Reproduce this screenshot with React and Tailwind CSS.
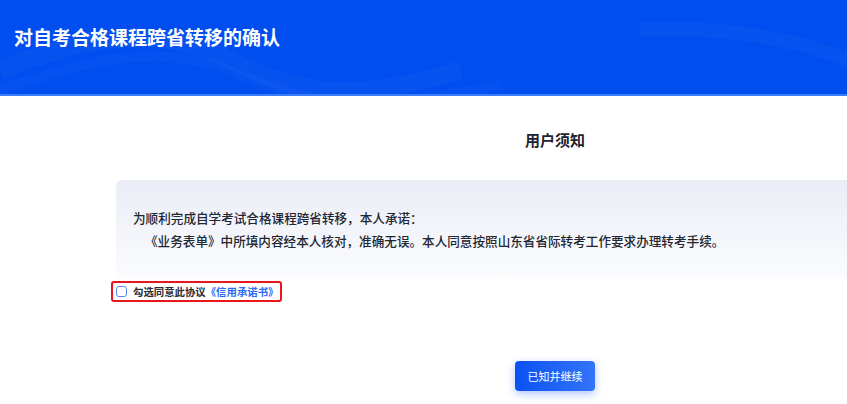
import React from 'react';

const font = { fontFamily: '"Noto Sans CJK SC", "Noto Sans", sans-serif' };

// header band with faint wave lines
const Header = () => (
    <div className="relative h-[96px] bg-[#004ef0] overflow-hidden border-b-2 border-[#3b7cf8]">
        <svg className="absolute inset-0" width="847" height="96" viewBox="0 0 847 96" fill="none">
            <path d="M0 70 C 80 40, 150 20, 230 60 S 360 100, 460 70" stroke="#ffffff" strokeOpacity="0.03" strokeWidth="18" />
            <path d="M0 90 C 90 60, 160 40, 240 75 S 380 110, 500 85" stroke="#ffffff" strokeOpacity="0.025" strokeWidth="10" />
            <path d="M640 30 C 720 25, 800 40, 847 60" stroke="#ffffff" strokeOpacity="0.03" strokeWidth="14" />
        </svg>
        <h1 className="relative pl-[14px] pt-[24px] text-[19px] leading-[26px] font-bold text-white">
            对自考合格课程跨省转移的确认
        </h1>
    </div>
);

const App = () => {
    return (
        <div className="w-[847px] h-[404px] overflow-hidden bg-white" style={font}>
            <Header />
            <div className="ml-[116px] w-[878px]">
                <h2 className="mt-[34px] text-center text-[15px] leading-[20px] font-bold text-[#1f2330]">用户须知</h2>

                {/* notice box */}
                <div className="mt-[30px] h-[98px] rounded-tl-[6px] bg-gradient-to-b from-[#eaedf6] to-[#fbfcfe] pl-[17px] pt-[26px] text-[12.6px] leading-[23px] font-medium text-[#222631]">
                    <p>为顺利完成自学考试合格课程跨省转移，本人承诺：</p>
                    <p className="pl-[12px]">《业务表单》中所填内容经本人核对，准确无误。本人同意按照山东省省际转考工作要求办理转考手续。</p>
                </div>

                {/* agreement checkbox */}
                <div className="-ml-[5px] -mt-[1px] inline-flex h-[21px] items-center gap-[6px] rounded-[3px] border-2 border-[#e8161d] pl-[3px] pr-[2px]">
                    <span className="h-[11px] w-[11px] rounded-[3px] border border-[#5b86ee] bg-white" />
                    <span className="text-[10.4px] leading-[15px] font-bold text-[#2a2d36]">
                        勾选同意此协议<span className="text-[#2b6cf3]">《信用承诺书》</span>
                    </span>
                </div>

                <div className="mt-[59px] flex justify-center">
                    <button className="h-[30px] w-[80px] rounded-[4px] bg-gradient-to-r from-[#0a50f4] to-[#3474f8] text-[11px] text-white shadow-[0_3px_8px_rgba(20,90,245,0.35)]">
                        已知并继续
                    </button>
                </div>
            </div>
        </div>
    );
};

export default App;
